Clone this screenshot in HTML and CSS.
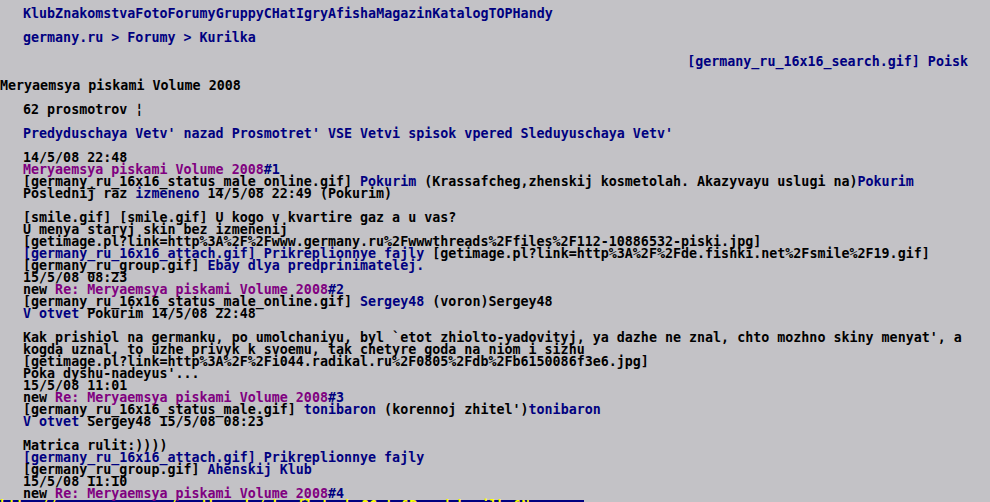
FILE: index.html
```html
<!DOCTYPE html>
<html lang="ru">
<head>
  <meta charset="UTF-8" />
  <title>Meryaemsya piskami Volume 2008 | Kurilka</title>
  <link rel="stylesheet" href="styles.css">
</head>
<body>
<div class="screen">
  <!-- top menu -->
  <div class="line ind"><a href="#">Klub</a><a href="#">Znakomstva</a><a href="#">Foto</a><a href="#">Forumy</a><a href="#">Gruppy</a><a href="#">CHat</a><a href="#">Igry</a><a href="#">Afisha</a><a href="#">Magazin</a><a href="#">Katalog</a><a href="#">TOP</a><a href="#">Handy</a></div>

  <div class="line ind gap"><a href="#">germany.ru</a><span class="crumb"> &gt; </span><a href="#">Forumy</a><span class="crumb"> &gt; </span><a href="#">Kurilka</a></div>

  <div class="line search gap"><a href="#">[germany_ru_16x16_search.gif] Poisk</a></div>

  <h1 class="line gap">Meryaemsya piskami Volume 2008</h1>

  <div class="line ind gap">62 prosmotrov ¦</div>

  <div class="line ind gap"><a href="#">Predyduschaya Vetv' nazad</a> <a href="#">Prosmotret' VSE Vetvi spisok</a> <a href="#">vpered Sleduyuschaya Vetv'</a></div>

  <!-- posts -->
  <div class="post gap">
    <div class="line ind">14/5/08 22:48</div>
    <div class="line ind"><a class="seen" href="#">Meryaemsya piskami Volume 2008</a><a href="#">#1</a></div>
    <div class="line ind">[germany_ru_16x16_status_male_online.gif] <a href="#">Pokurim</a> (Krassafcheg,zhenskij kosmetolah. Akazyvayu uslugi na)<a href="#">Pokurim</a></div>
    <div class="line ind">Poslednij raz <a href="#">izmeneno</a> 14/5/08 22:49 (Pokurim)</div>
    <div class="line ind gap">[smile.gif] [smile.gif] U kogo v kvartire gaz a u vas?</div>
    <div class="line ind">U menya staryj skin bez izmenenij</div>
    <div class="line ind">[getimage.pl?link=http%3A%2F%2Fwww.germany.ru%2Fwwwthreads%2Ffiles%2F112-10886532-piski.jpg]</div>
    <div class="line ind"><a href="#">[germany_ru_16x16_attach.gif] Prikreplionnye fajly</a> [getimage.pl?link=http%3A%2F%2Fde.fishki.net%2Fsmile%2F19.gif]</div>
    <div class="line ind">[germany_ru_group.gif] <a href="#">Ebay dlya predprinimatelej.</a></div>
  </div>

  <div class="post">
    <div class="line ind">15/5/08 08:23</div>
    <div class="line ind">new <a class="seen" href="#">Re: Meryaemsya piskami Volume 2008</a><a href="#">#2</a></div>
    <div class="line ind">[germany_ru_16x16_status_male_online.gif] <a href="#">Sergey48</a> (voron)Sergey48</div>
    <div class="line ind"><a href="#">V otvet</a> Pokurim 14/5/08 22:48</div>
    <div class="line ind gap">Kak prishiol na germanku, po umolchaniyu, byl `etot zhiolto-yadovityj, ya dazhe ne znal, chto mozhno skiny menyat', a</div>
    <div class="line ind">kogda uznal, to uzhe privyk k svoemu, tak chetyre goda na niom i sizhu</div>
    <div class="line ind">[getimage.pl?link=http%3A%2F%2Fi044.radikal.ru%2F0805%2Fdb%2Fb6150086f3e6.jpg]</div>
    <div class="line ind">Poka dyshu-nadeyus'...</div>
  </div>

  <div class="post">
    <div class="line ind">15/5/08 11:01</div>
    <div class="line ind">new <a class="seen" href="#">Re: Meryaemsya piskami Volume 2008</a><a href="#">#3</a></div>
    <div class="line ind">[germany_ru_16x16_status_male.gif] <a href="#">tonibaron</a> (korennoj zhitel')<a href="#">tonibaron</a></div>
    <div class="line ind"><a href="#">V otvet</a> Sergey48 15/5/08 08:23</div>
    <div class="line ind gap">Matrica rulit:))))</div>
    <div class="line ind"><a href="#">[germany_ru_16x16_attach.gif] Prikreplionnye fajly</a></div>
    <div class="line ind">[germany_ru_group.gif] <a href="#">Ahenskij Klub</a></div>
  </div>

  <div class="post">
    <div class="line ind">15/5/08 11:10</div>
    <div class="line ind">new <a class="seen" href="#">Re: Meryaemsya piskami Volume 2008</a><a href="#">#4</a></div>
  </div>

  <!-- status line of the text browser -->
  <div class="line status">http://www.germany.ru/wwwthreads/showflat.php?Cat=&amp;Board=kurilka&amp;Nu</div>
</div>
</body>
</html>
```

FILE: styles.css
```css
html, body {
  margin: 0;
  height: 502px;
  overflow: hidden;
}

body {
  background-color: #c3c2c6;
  color: #000;
  font-family: "DejaVu Sans Mono", "Liberation Mono", monospace;
  font-weight: bold;
  font-size: 13.33px;
  line-height: 12px;
}

.screen {
  padding-top: 8px;
}

/* every text row is one 12px cell row */
.line {
  height: 12px;
  white-space: pre;
  margin: 0;
}

h1.line {
  font-size: 13.33px;
  font-weight: bold;
}

.ind {
  padding-left: 23px;
}

.gap {
  margin-top: 12px;
}

a {
  color: #000080;
  text-decoration: none;
}

a.seen {
  color: #800080;
}

.crumb {
  color: #000080;
}

.search {
  text-align: right;
  padding-right: 22px;
}

.status {
  width: 584px;
  background-color: #000080;
  color: #ffff00;
}
```
